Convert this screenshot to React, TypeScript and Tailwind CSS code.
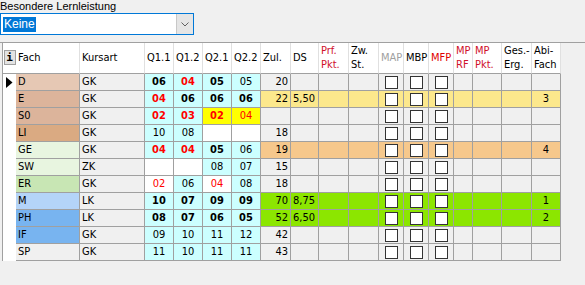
import React from 'react';

type QCell = { v: string; bold?: boolean; red?: boolean; bg: string };

interface Row {
    fach: string;
    fachBg: string;
    art: string;
    q: QCell[];
    zul: string;
    ds: string;
    abi: string;
    rowBg: string;
    current?: boolean;
}

const CYAN = 'bg-[#ccffff]';
const WHITE = 'bg-white';
const YELLOW = 'bg-[#ffff00]';
const GRAY = 'bg-[#f0f0f0]';

const rows: Row[] = [
    {
        fach: 'D', fachBg: 'bg-[#e6c8b4]', art: 'GK', current: true,
        q: [{ v: '06', bold: true, bg: CYAN }, { v: '04', bold: true, red: true, bg: CYAN }, { v: '05', bold: true, bg: CYAN }, { v: '05', bg: CYAN }],
        zul: '20', ds: '', abi: '', rowBg: GRAY,
    },
    {
        fach: 'E', fachBg: 'bg-[#dcb49b]', art: 'GK',
        q: [{ v: '04', bold: true, red: true, bg: CYAN }, { v: '06', bold: true, bg: CYAN }, { v: '06', bold: true, bg: CYAN }, { v: '06', bold: true, bg: CYAN }],
        zul: '22', ds: '5,50', abi: '3', rowBg: 'bg-[#fce88c]',
    },
    {
        fach: 'S0', fachBg: 'bg-[#dcb49b]', art: 'GK',
        q: [{ v: '02', bold: true, red: true, bg: CYAN }, { v: '03', bold: true, red: true, bg: CYAN }, { v: '02', bold: true, red: true, bg: YELLOW }, { v: '04', red: true, bg: YELLOW }],
        zul: '', ds: '', abi: '', rowBg: GRAY,
    },
    {
        fach: 'LI', fachBg: 'bg-[#daaa82]', art: 'GK',
        q: [{ v: '10', bg: CYAN }, { v: '08', bg: CYAN }, { v: '', bg: WHITE }, { v: '', bg: WHITE }],
        zul: '18', ds: '', abi: '', rowBg: GRAY,
    },
    {
        fach: 'GE', fachBg: 'bg-[#e8f5e0]', art: 'GK',
        q: [{ v: '04', bold: true, red: true, bg: CYAN }, { v: '04', bold: true, red: true, bg: CYAN }, { v: '05', bold: true, bg: CYAN }, { v: '06', bg: CYAN }],
        zul: '19', ds: '', abi: '4', rowBg: 'bg-[#f6c88c]',
    },
    {
        fach: 'SW', fachBg: 'bg-[#e8f5e0]', art: 'ZK',
        q: [{ v: '', bg: WHITE }, { v: '', bg: WHITE }, { v: '08', bg: CYAN }, { v: '07', bg: CYAN }],
        zul: '15', ds: '', abi: '', rowBg: GRAY,
    },
    {
        fach: 'ER', fachBg: 'bg-[#c8e6b4]', art: 'GK',
        q: [{ v: '02', red: true, bg: WHITE }, { v: '06', bg: CYAN }, { v: '04', red: true, bg: WHITE }, { v: '08', bg: CYAN }],
        zul: '18', ds: '', abi: '', rowBg: GRAY,
    },
    {
        fach: 'M', fachBg: 'bg-[#b4d4f8]', art: 'LK',
        q: [{ v: '10', bold: true, bg: CYAN }, { v: '07', bold: true, bg: CYAN }, { v: '09', bold: true, bg: CYAN }, { v: '09', bold: true, bg: CYAN }],
        zul: '70', ds: '8,75', abi: '1', rowBg: 'bg-[#8ce600]',
    },
    {
        fach: 'PH', fachBg: 'bg-[#78b4f0]', art: 'LK',
        q: [{ v: '08', bold: true, bg: CYAN }, { v: '07', bold: true, bg: CYAN }, { v: '06', bold: true, bg: CYAN }, { v: '05', bold: true, bg: CYAN }],
        zul: '52', ds: '6,50', abi: '2', rowBg: 'bg-[#8ce600]',
    },
    {
        fach: 'IF', fachBg: 'bg-[#78b4f0]', art: 'GK',
        q: [{ v: '09', bg: CYAN }, { v: '10', bg: CYAN }, { v: '11', bg: CYAN }, { v: '12', bg: CYAN }],
        zul: '42', ds: '', abi: '', rowBg: GRAY,
    },
    {
        fach: 'SP', fachBg: GRAY, art: 'GK',
        q: [{ v: '11', bg: CYAN }, { v: '10', bg: CYAN }, { v: '11', bg: CYAN }, { v: '11', bg: CYAN }],
        zul: '43', ds: '', abi: '', rowBg: GRAY,
    },
];

// header: label lines + colour
const headers: { lines: string[]; color: string }[] = [
    { lines: ['Fach'], color: 'text-black' },
    { lines: ['Kursart'], color: 'text-black' },
    { lines: ['Q1.1'], color: 'text-black' },
    { lines: ['Q1.2'], color: 'text-black' },
    { lines: ['Q2.1'], color: 'text-black' },
    { lines: ['Q2.2'], color: 'text-black' },
    { lines: ['Zul.'], color: 'text-black' },
    { lines: ['DS'], color: 'text-black' },
    { lines: ['Prf.', 'Pkt.'], color: 'text-[#d0102a]' },
    { lines: ['Zw.', 'St.'], color: 'text-black' },
    { lines: ['MAP'], color: 'text-[#a0a0a0]' },
    { lines: ['MBP'], color: 'text-black' },
    { lines: ['MFP'], color: 'text-[#e00000]' },
    { lines: ['MP', 'RF'], color: 'text-[#d0102a]' },
    { lines: ['MP', 'Pkt.'], color: 'text-[#d0102a]' },
    { lines: ['Ges.-', 'Erg.'], color: 'text-black' },
    { lines: ['Abi-', 'Fach'], color: 'text-black' },
];

const cell = 'h-[17px] border-r border-b border-[#a0a0a0] flex items-center';

const CheckBox: React.FC = () => (
    <div className="w-[13px] h-[13px] border border-[#333333] bg-white" />
);

const App: React.FC = () => {
    return (
        <div
            className="w-[585px] h-[285px] overflow-hidden bg-[#f0f0f0] text-black"
            style={{ fontFamily: '"DejaVu Sans Condensed", "Liberation Sans", sans-serif' }}
        >
            {/* ---------------Besondere Lernleistung--------------- */}
            <div className="h-[13px] leading-[13px] text-[11px] font-['Liberation_Sans',sans-serif]">
                Besondere Lernleistung
            </div>
            <div className="w-[194px] h-[22px] border border-[#0078d7] bg-white flex items-center justify-between font-['Liberation_Sans',sans-serif]">
                <span className="ml-[2px] h-[15px] leading-[15px] px-[1px] bg-[#0078d7] text-white text-[12px]">Keine</span>
                <div className="w-[17px] h-[20px] bg-[#e5e5e5] border-l border-[#c8c8c8] flex items-center justify-center">
                    <svg width="8" height="5" viewBox="0 0 8 5">
                        <path d="M0.5 0.5 L4 4 L7.5 0.5" fill="none" stroke="#606060" strokeWidth="1" />
                    </svg>
                </div>
            </div>

            {/* ---------------Grid--------------- */}
            <div className="mt-[7px] border-t border-[#a0a0a0] pl-[2px] text-[11px]">
                <div className="w-[559px] border-l border-[#a0a0a0] grid grid-cols-[13px_64px_65px_29px_29px_29px_29px_30px_28px_30px_30px_25px_25px_25px_19px_29px_30px_29px]">
                    {/* header */}
                    <div className="h-[31px] bg-white border-b border-[#a0a0a0] flex items-start justify-center pt-[7px]">
                        <div className="w-[12px] h-[15px] bg-[#e3e3e3] border border-[#a0a0a0] flex items-center justify-center font-['DejaVu_Sans_Mono',monospace] font-bold text-[11px] leading-none">
                            i
                        </div>
                    </div>
                    {headers.map((h, i) => (
                        <div
                            key={i}
                            className={`h-[31px] bg-white border-b border-r border-b-[#a0a0a0] border-r-[#e0e0e0] flex flex-col justify-center pl-[2px] leading-[14px] whitespace-nowrap ${h.color}`}
                        >
                            {h.lines.map((l) => (
                                <span key={l}>{l}</span>
                            ))}
                        </div>
                    ))}

                    {/* body */}
                    {rows.map((r) => (
                        <React.Fragment key={r.fach}>
                            <div className="h-[17px] bg-white flex items-center pl-[3px]">
                                {r.current && (
                                    <svg width="7" height="11" viewBox="0 0 7 11">
                                        <polygon points="0,0 6.5,5.5 0,11" fill="#000" />
                                    </svg>
                                )}
                            </div>
                            <div className={`${cell} ${r.fachBg} pl-[2px]`}>{r.fach}</div>
                            <div className={`${cell} ${GRAY} pl-[2px]`}>{r.art}</div>
                            {r.q.map((q, i) => (
                                <div
                                    key={i}
                                    className={`${cell} ${q.bg} justify-center ${q.bold ? 'font-bold' : ''} ${q.red ? 'text-[#ff0000]' : ''}`}
                                >
                                    {q.v}
                                </div>
                            ))}
                            <div className={`${cell} ${r.rowBg} justify-end pr-[2px]`}>{r.zul}</div>
                            <div className={`${cell} ${r.rowBg} pl-[2px]`}>{r.ds}</div>
                            <div className={`${cell} ${r.rowBg}`} />
                            <div className={`${cell} ${r.rowBg}`} />
                            <div className={`${cell} ${r.rowBg} justify-center`}><CheckBox /></div>
                            <div className={`${cell} ${r.rowBg} justify-center`}><CheckBox /></div>
                            <div className={`${cell} ${r.rowBg} justify-center`}><CheckBox /></div>
                            <div className={`${cell} ${r.rowBg}`} />
                            <div className={`${cell} ${r.rowBg}`} />
                            <div className={`${cell} ${r.rowBg}`} />
                            <div className={`${cell} ${r.rowBg} justify-center`}>{r.abi}</div>
                        </React.Fragment>
                    ))}
                </div>
            </div>
        </div>
    );
};

export default App;
